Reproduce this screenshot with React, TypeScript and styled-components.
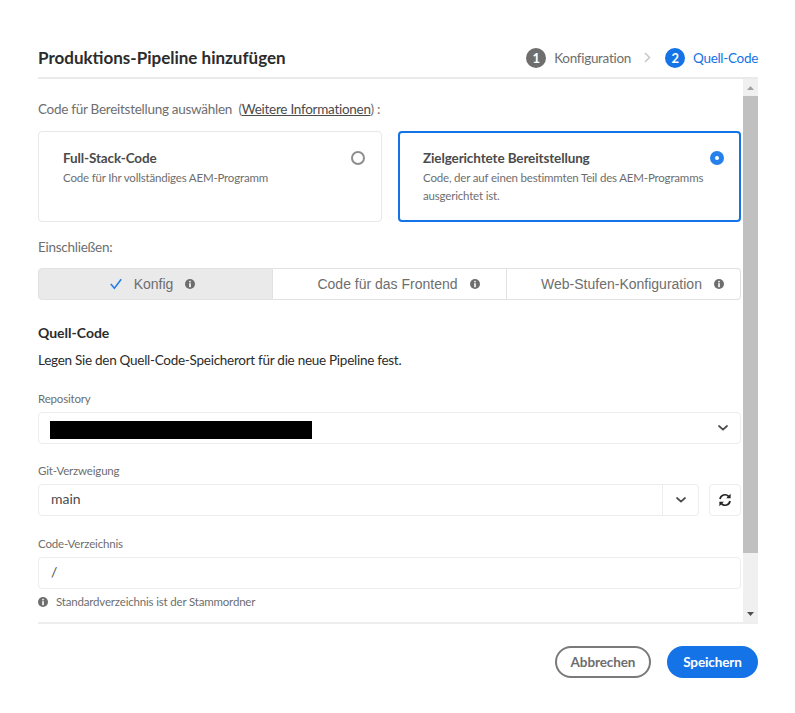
import { createGlobalStyle, styled } from 'styled-components';

const GlobalStyle = createGlobalStyle`
    html, body {
        margin: 0;
        padding: 0;
        background: #fff;
    }
    body {
        font-family: Lato, "Noto Sans", sans-serif;
        color: #4b4b4b;
    }
`;

const BLUE = '#1473e6';

// Dialog shell
const Dialog = styled.div`
    width: 795px;
    height: 713px;
    box-sizing: border-box;
    padding: 44px 37px 0 38px;
    overflow: hidden;
`;

const Header = styled.header`
    display: flex;
    align-items: center;
    justify-content: space-between;
    height: 33px;
    border-bottom: 2px solid #eaeaea;
`;

const Title = styled.h1`
    margin: 0;
    font-size: 17px;
    font-weight: 700;
    color: #2c2c2c;
    position: relative;
    top: -3px;
`;

const Steps = styled.ol`
    display: flex;
    align-items: center;
    list-style: none;
    margin: 0;
    padding: 0;
    position: relative;
    top: -3px;
`;

const Step = styled.li<{ $active?: boolean }>`
    display: flex;
    align-items: center;
    gap: 8px;
    font-size: 13.5px;
    letter-spacing: -0.3px;
    color: ${(p) => (p.$active ? BLUE : '#6e6e6e')};
`;

const StepNumber = styled.span<{ $active?: boolean }>`
    display: flex;
    align-items: center;
    justify-content: center;
    width: 20px;
    height: 20px;
    border-radius: 50%;
    color: #fff;
    font-size: 13px;
    font-weight: 700;
    background: ${(p) => (p.$active ? BLUE : '#6e6e6e')};
`;

const StepArrow = styled.svg`
    margin: 0 14px 0 13px;
`;

// Scrolling part of the dialog
const ScrollArea = styled.div`
    display: flex;
    height: 543px;
    border-bottom: 2px solid #eeeeee;
`;

const Content = styled.main`
    flex: 1;
    min-width: 0;
    padding-top: 21px;
`;

const Scrollbar = styled.div`
    flex: none;
    width: 15px;
    margin-left: 2px;
    display: flex;
    flex-direction: column;
    background: #f0f0f0;
`;

const ScrollButton = styled.div`
    height: 17px;
    display: flex;
    align-items: center;
    justify-content: center;
`;

const ScrollThumb = styled.div`
    height: 457px;
    background: #c0c0c0;
`;

const ScrollSpace = styled.div`
    flex: 1;
`;

const Prompt = styled.p`
    margin: 0;
    height: 21px;
    line-height: 18px;
    font-size: 13.5px;
    letter-spacing: -0.27px;
    color: #6e6e6e;
`;

const MoreLink = styled.a`
    color: #4b4b4b;
    text-decoration: underline;
`;

const CardRow = styled.div`
    display: grid;
    grid-template-columns: 344px 343px;
    gap: 16px;
    margin-top: 10px;
`;

const Card = styled.div<{ $selected?: boolean }>`
    position: relative;
    box-sizing: border-box;
    height: 91px;
    padding: ${(p) => (p.$selected ? '16px 23px' : '17px 24px')};
    border-radius: 4px;
    border: ${(p) => (p.$selected ? `2px solid ${BLUE}` : '1px solid #e8e8e8')};
`;

const CardTitle = styled.div`
    font-size: 13.5px;
    line-height: 18px;
    font-weight: 700;
    letter-spacing: -0.12px;
    color: #4b4b4b;
`;

const CardText = styled.div`
    margin-top: 2px;
    font-size: 11.5px;
    line-height: 18px;
    letter-spacing: -0.18px;
    color: #6e6e6e;
    max-width: 285px;
`;

const Radio = styled.span<{ $checked?: boolean }>`
    position: absolute;
    top: ${(p) => (p.$checked ? '18px' : '19px')};
    right: ${(p) => (p.$checked ? '15px' : '16px')};
    box-sizing: border-box;
    width: 14px;
    height: 14px;
    border-radius: 50%;
    background: #fff;
    border: ${(p) => (p.$checked ? '5px solid #2680eb' : '2px solid #8e8e8e')};
`;

const SectionLabel = styled.div`
    margin-top: 16px;
    font-size: 13.5px;
    line-height: 18px;
    letter-spacing: -0.27px;
    color: #6e6e6e;
`;

const TabBar = styled.div`
    display: grid;
    grid-template-columns: 235px 234px 234px;
    height: 32px;
    margin-top: 12px;
`;

const Tab = styled.div<{ $selected?: boolean; $first?: boolean; $last?: boolean }>`
    display: flex;
    align-items: center;
    justify-content: center;
    gap: 12px;
    box-sizing: border-box;
    font-family: "Liberation Sans", Arial, sans-serif;
    font-size: 14px;
    color: #6e6e6e;
    border: 1px solid #e1e1e1;
    border-left-width: ${(p) => (p.$first ? '1px' : '0')};
    padding: ${(p) => (p.$first ? '0 6px 0 0' : '0 0 0 18px')};
    background: ${(p) => (p.$selected ? '#eaeaea' : '#fff')};
    border-radius: ${(p) => (p.$first ? '4px 0 0 4px' : p.$last ? '0 4px 4px 0' : '0')};
`;

const Heading = styled.h2`
    margin: 24px 0 0;
    font-size: 14px;
    line-height: 18px;
    font-weight: 700;
    color: #2c2c2c;
`;

const Lead = styled.p`
    margin: 9px 0 0;
    font-size: 13.5px;
    line-height: 18px;
    letter-spacing: -0.27px;
    color: #2c2c2c;
`;

const Field = styled.div<{ $gap: number }>`
    margin-top: ${(p) => p.$gap}px;
`;

const FieldLabel = styled.label`
    display: block;
    height: 21px;
    font-size: 11.5px;
    line-height: 15px;
    letter-spacing: -0.18px;
    color: #6e6e6e;
`;

const InputRow = styled.div`
    display: flex;
    gap: 10px;
`;

const InputBox = styled.div`
    flex: 1;
    display: flex;
    align-items: center;
    box-sizing: border-box;
    height: 32px;
    padding-left: 12px;
    border: 1px solid #ededed;
    border-radius: 4px;
    font-size: 14px;
    color: #4b4b4b;
`;

const InputText = styled.span`
    flex: 1;
    padding-bottom: 3px;
`;

const Redacted = styled.div`
    width: 262px;
    height: 18px;
    margin: 7px 0 0 -1px;
    background: #000;
`;

const SelectToggle = styled.span<{ $divided?: boolean }>`
    flex: none;
    align-self: stretch;
    width: 35px;
    display: flex;
    align-items: center;
    justify-content: center;
    color: #4b4b4b;
    border-left: ${(p) => (p.$divided ? '1px solid #ededed' : 'none')};
`;

const IconButton = styled.button`
    flex: none;
    width: 32px;
    height: 32px;
    padding: 0;
    display: flex;
    align-items: center;
    justify-content: center;
    background: #fff;
    border: 1px solid #ededed;
    border-radius: 4px;
`;

const Help = styled.div`
    display: flex;
    align-items: center;
    gap: 8px;
    margin-top: 5px;
    font-size: 11.5px;
    line-height: 16px;
    letter-spacing: -0.18px;
    color: #6e6e6e;
`;

const Footer = styled.footer`
    display: flex;
    justify-content: flex-end;
    gap: 16px;
    margin-top: 22px;
`;

const BaseButton = styled.button`
    box-sizing: border-box;
    height: 32px;
    border-radius: 16px;
    font-family: inherit;
    font-size: 13.5px;
    font-weight: 700;
    letter-spacing: -0.1px;
    padding: 0;
`;

const CancelButton = styled(BaseButton)`
    width: 96px;
    background: #fff;
    color: #6e6e6e;
    border: 2px solid #7a7a7a;
`;

const SaveButton = styled(BaseButton)`
    width: 91px;
    background: ${BLUE};
    color: #fff;
    border: none;
`;

function InfoIcon() {
    return (
        <svg width="10" height="10" viewBox="0 0 10 10" aria-hidden="true">
            <circle cx="5" cy="5" r="5" fill="#6e6e6e" />
            <rect x="4.2" y="1.8" width="1.6" height="1.6" rx="0.6" fill="#fff" />
            <rect x="4.2" y="4.2" width="1.6" height="4" fill="#fff" />
        </svg>
    );
}

function Chevron() {
    return (
        <svg width="10" height="6" viewBox="0 0 10 6" aria-hidden="true">
            <path d="M1 1l4 3.6L9 1" fill="none" stroke="#4b4b4b" strokeWidth="1.7" strokeLinecap="round" />
        </svg>
    );
}

function RefreshIcon() {
    return (
        <svg width="14" height="14" viewBox="0 0 14 14" aria-hidden="true">
            <path d="M2 6a5 5 0 0 1 8.6-2.6" fill="none" stroke="#222" strokeWidth="1.7" />
            <path d="M12.6 0.8v4.4H8.2z" fill="#222" />
            <path d="M12 8a5 5 0 0 1-8.6 2.6" fill="none" stroke="#222" strokeWidth="1.7" />
            <path d="M1.4 13.2V8.8h4.4z" fill="#222" />
        </svg>
    );
}

export default function App() {
    return (
        <>
            <GlobalStyle />
            <Dialog>
                <Header>
                    <Title>Produktions-Pipeline hinzufügen</Title>
                    <Steps>
                        <Step>
                            <StepNumber>1</StepNumber>
                            Konfiguration
                        </Step>
                        <StepArrow width="7" height="11" viewBox="0 0 7 11" aria-hidden="true">
                            <path d="M1 1l4.5 4.5L1 10" fill="none" stroke="#c8c8c8" strokeWidth="1.6" />
                        </StepArrow>
                        <Step $active>
                            <StepNumber $active>2</StepNumber>
                            Quell-Code
                        </Step>
                    </Steps>
                </Header>

                <ScrollArea>
                    <Content>
                        <Prompt>
                            Code für Bereitstellung auswählen&nbsp; (<MoreLink>Weitere Informationen</MoreLink>) :
                        </Prompt>

                        <CardRow>
                            <Card>
                                <CardTitle>Full-Stack-Code</CardTitle>
                                <CardText>Code für Ihr vollständiges AEM-Programm</CardText>
                                <Radio />
                            </Card>
                            <Card $selected>
                                <CardTitle>Zielgerichtete Bereitstellung</CardTitle>
                                <CardText>Code, der auf einen bestimmten Teil des AEM-Programms ausgerichtet ist.</CardText>
                                <Radio $checked />
                            </Card>
                        </CardRow>

                        <SectionLabel>Einschließen:</SectionLabel>
                        <TabBar>
                            <Tab $selected $first>
                                <svg width="12" height="12" viewBox="0 0 12 12" aria-hidden="true">
                                    <path d="M0.8 6l3.6 4.2L11.2 1.2" fill="none" stroke="#2680eb" strokeWidth="1.6" />
                                </svg>
                                Konfig
                                <InfoIcon />
                            </Tab>
                            <Tab>
                                Code für das Frontend
                                <InfoIcon />
                            </Tab>
                            <Tab $last>
                                Web-Stufen-Konfiguration
                                <InfoIcon />
                            </Tab>
                        </TabBar>

                        <Heading>Quell-Code</Heading>
                        <Lead>Legen Sie den Quell-Code-Speicherort für die neue Pipeline fest.</Lead>

                        <Field $gap={22}>
                            <FieldLabel>Repository</FieldLabel>
                            <InputBox>
                                <InputText>
                                    <Redacted />
                                </InputText>
                                <SelectToggle>
                                    <Chevron />
                                </SelectToggle>
                            </InputBox>
                        </Field>

                        <Field $gap={19}>
                            <FieldLabel>Git-Verzweigung</FieldLabel>
                            <InputRow>
                                <InputBox>
                                    <InputText>main</InputText>
                                    <SelectToggle $divided>
                                        <Chevron />
                                    </SelectToggle>
                                </InputBox>
                                <IconButton aria-label="Aktualisieren">
                                    <RefreshIcon />
                                </IconButton>
                            </InputRow>
                        </Field>

                        <Field $gap={20}>
                            <FieldLabel>Code-Verzeichnis</FieldLabel>
                            <InputBox>
                                <InputText>/</InputText>
                            </InputBox>
                            <Help>
                                <InfoIcon />
                                Standardverzeichnis ist der Stammordner
                            </Help>
                        </Field>
                    </Content>

                    <Scrollbar>
                        <ScrollButton>
                            <svg width="7" height="4" viewBox="0 0 7 4" aria-hidden="true">
                                <path d="M3.5 0L7 4H0z" fill="#a3a3a3" />
                            </svg>
                        </ScrollButton>
                        <ScrollThumb />
                        <ScrollSpace />
                        <ScrollButton>
                            <svg width="7" height="4" viewBox="0 0 7 4" aria-hidden="true">
                                <path d="M0 0h7L3.5 4z" fill="#505050" />
                            </svg>
                        </ScrollButton>
                    </Scrollbar>
                </ScrollArea>

                <Footer>
                    <CancelButton>Abbrechen</CancelButton>
                    <SaveButton>Speichern</SaveButton>
                </Footer>
            </Dialog>
        </>
    );
}
